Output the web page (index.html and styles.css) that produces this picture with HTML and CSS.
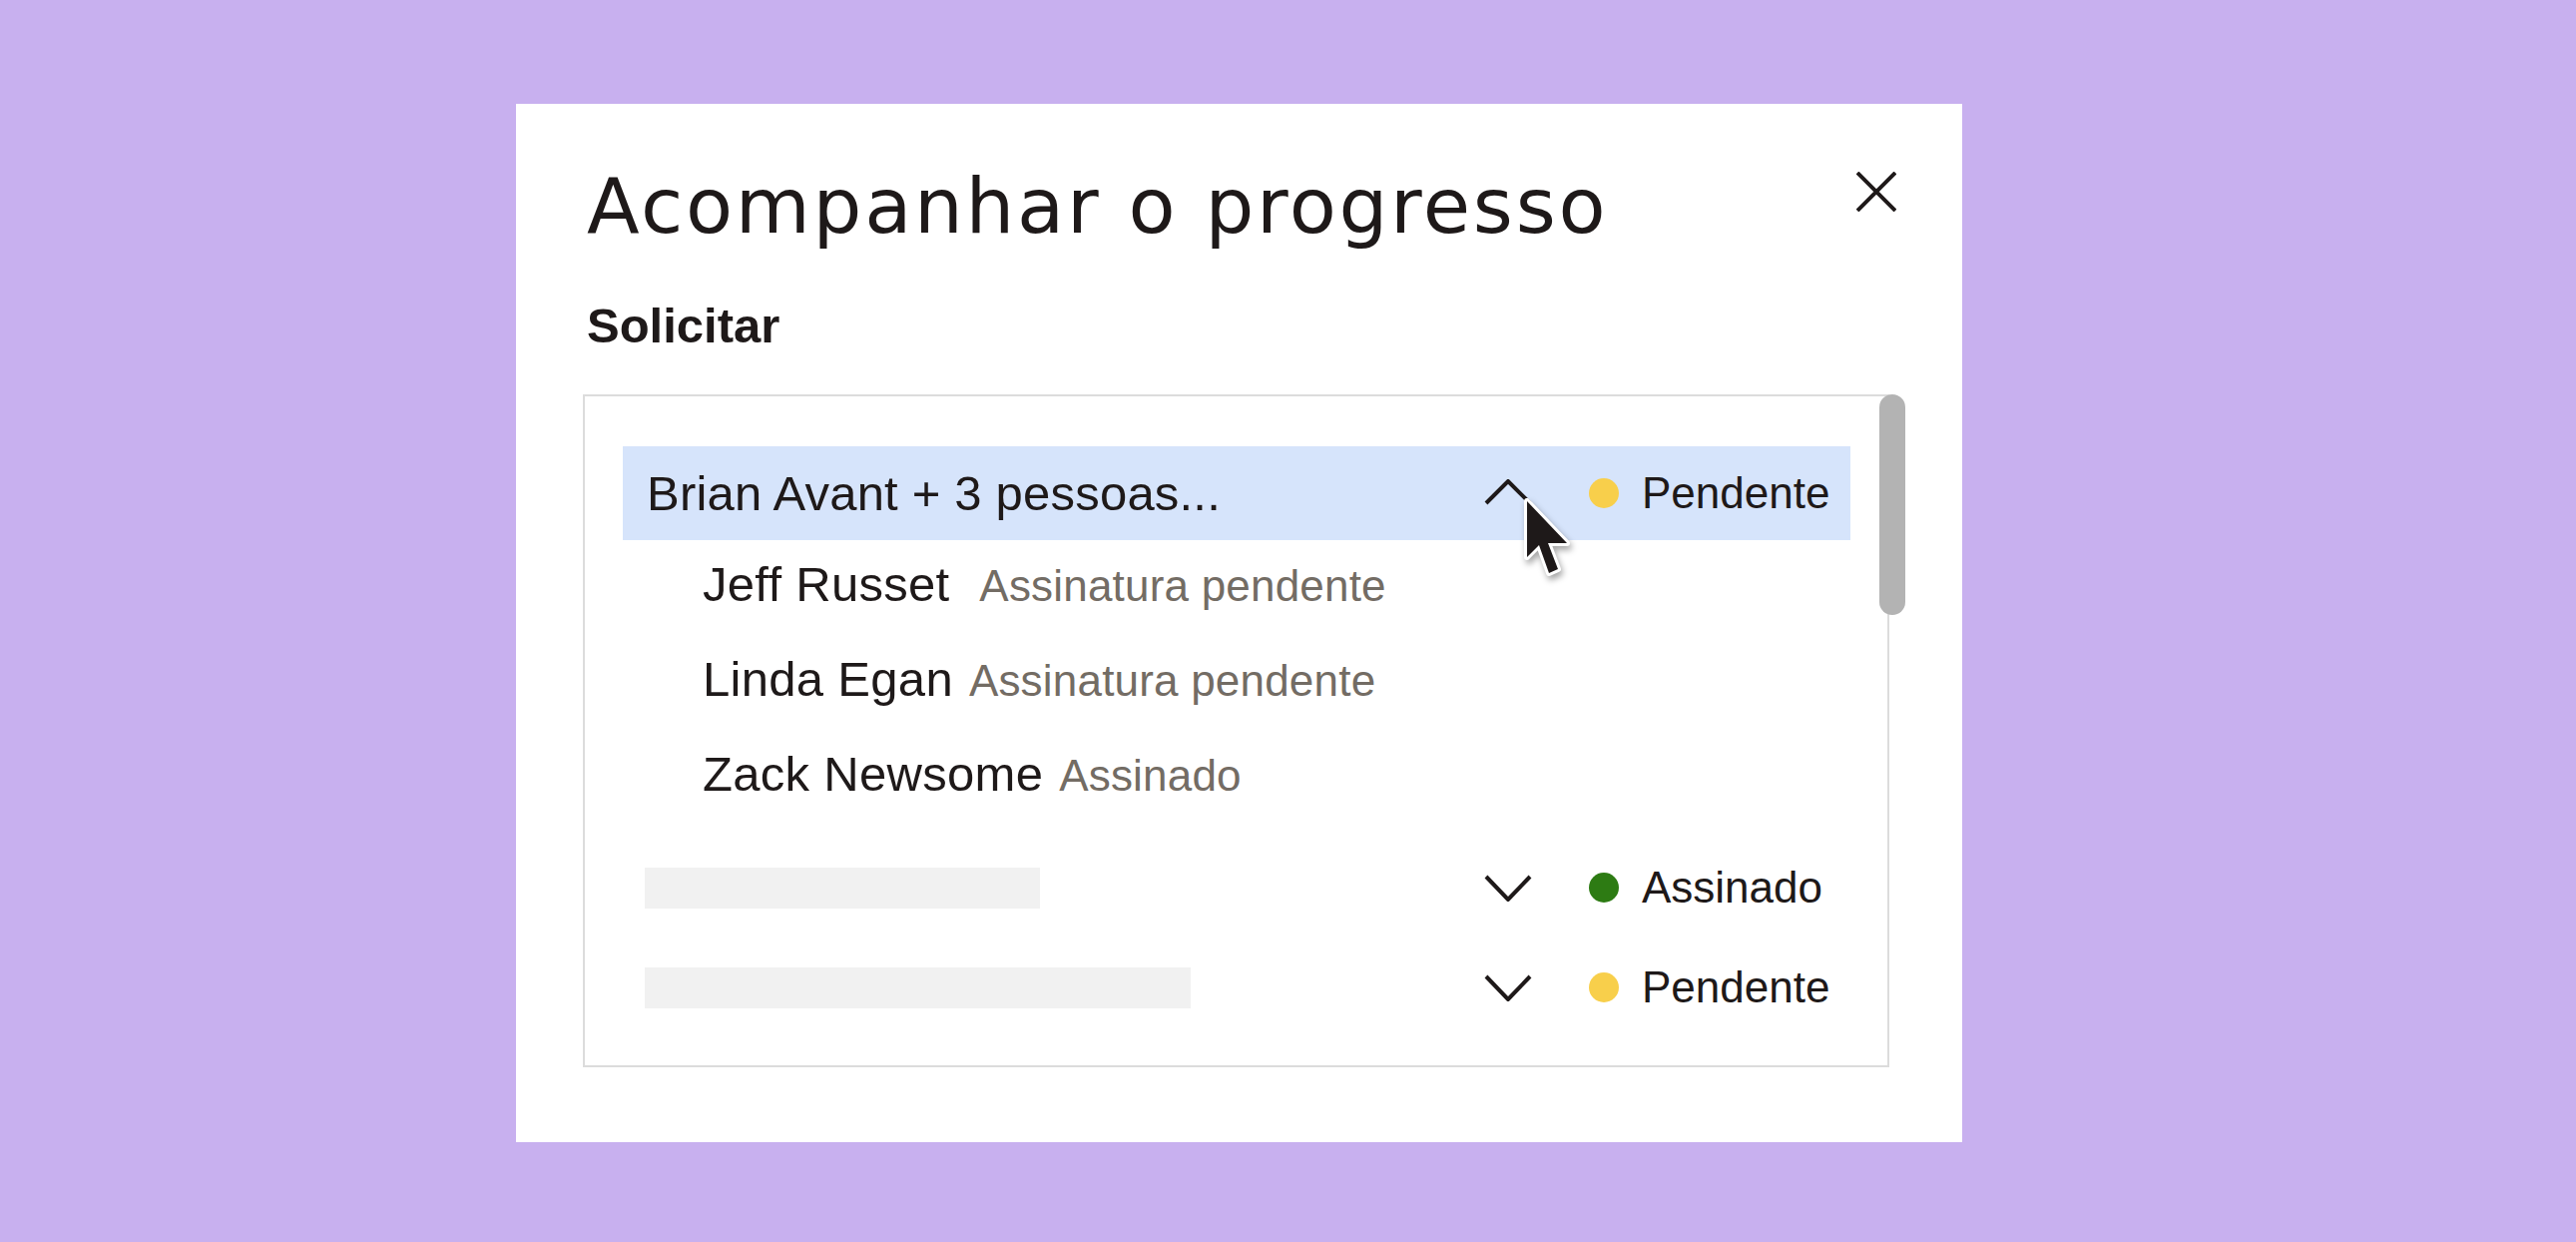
FILE: index.html
```html
<!DOCTYPE html>
<html lang="pt">
<head>
    <meta charset="UTF-8">
    <meta name="viewport" content="width=device-width, initial-scale=1.0">
    <title>Acompanhar o progresso</title>
    <link rel="stylesheet" href="styles.css">
</head>
<body>

    <div class="modal">
        <div class="modal-header">
            <h1 class="modal-title">Acompanhar o progresso</h1>
            <button class="close-btn" aria-label="Fechar">
                <svg width="40" height="40" viewBox="0 0 40 40">
                    <path d="M1 1 L39 39 M39 1 L1 39" stroke="#1e1919" stroke-width="4" fill="none"/>
                </svg>
            </button>
        </div>

        <h2 class="section-label">Solicitar</h2>

        <div class="request-list">
            <div class="scrollbar"></div>

            <div class="request-row active">
                <span class="request-name">Brian Avant + 3 pessoas...</span>
                <svg class="chevron" width="48" height="28" viewBox="0 0 48 28">
                    <polyline points="2,24 24,2 46,24" />
                </svg>
                <span class="status"><span class="dot pending"></span>Pendente</span>

                <svg class="cursor" width="70" height="100" viewBox="0 0 70 100">
                    <path d="M12 14 L12 70 L24 58 L34 86 L43 82 L33 56 L52 56 Z" />
                </svg>
            </div>

            <ul class="signers">
                <li><span class="signer-name">Jeff Russet</span>&nbsp; <span class="signer-status">Assinatura pendente</span></li>
                <li><span class="signer-name">Linda Egan</span> <span class="signer-status">Assinatura pendente</span></li>
                <li><span class="signer-name">Zack Newsome</span> <span class="signer-status">Assinado</span></li>
            </ul>

            <div class="request-row placeholder-row first">
                <span class="placeholder short"></span>
                <svg class="chevron" width="48" height="28" viewBox="0 0 48 28">
                    <polyline points="2,3 24,26 46,3" />
                </svg>
                <span class="status"><span class="dot signed"></span>Assinado</span>
            </div>

            <div class="request-row placeholder-row">
                <span class="placeholder long"></span>
                <svg class="chevron" width="48" height="28" viewBox="0 0 48 28">
                    <polyline points="2,3 24,26 46,3" />
                </svg>
                <span class="status"><span class="dot pending"></span>Pendente</span>
            </div>
        </div>
    </div>

</body>
</html>
```

FILE: styles.css
```css
html {
    background-color: #c8b0ef;
}
body {
    margin: 0;
    padding: 104px 0 0 517px;
    font-family: 'Liberation Sans', Arial, sans-serif;
    color: #1e1919;
}
.modal {
    width: 1449px;
    height: 1040px;
    box-sizing: border-box;
    padding: 64px 73px 0 67px;
    background-color: #ffffff;
}
.modal-header {
    display: flex;
    justify-content: space-between;
    align-items: flex-start;
}
.modal-title {
    margin: 0;
    padding-left: 4px;
    font-family: 'DejaVu Sans', sans-serif;
    font-weight: normal;
    font-size: 77px;
    line-height: 77px;
    letter-spacing: 2.7px;
}
.close-btn {
    margin: 4px -7px 0 0;
    padding: 0;
    border: none;
    background: none;
    width: 40px;
    height: 40px;
    cursor: pointer;
}
.close-btn svg {
    display: block;
}
.section-label {
    margin: 57px 0 45px 4px;
    font-size: 49px;
    line-height: 48px;
    font-weight: bold;
}
.request-list {
    position: relative;
    height: 674px;
    box-sizing: border-box;
    padding: 50px 37px 0 38px;
    border: 2px solid #dcdcdc;
}
.scrollbar {
    position: absolute;
    top: -2px;
    right: -18px;
    width: 26px;
    height: 221px;
    border-radius: 13px;
    background-color: #b3b3b3;
}
.request-row {
    position: relative;
    display: flex;
    align-items: center;
    height: 94px;
    padding-left: 24px;
}
.request-row.active {
    background-color: #d6e4fb;
}
.request-name {
    flex: 1;
    font-size: 49px;
    line-height: 48px;
    letter-spacing: 0.2px;
}
.chevron {
    display: block;
    margin-left: auto;
    margin-right: 57px;
    fill: none;
    stroke: #1e1919;
    stroke-width: 4;
}
.status {
    display: flex;
    align-items: center;
    gap: 23px;
    width: 262px;
    font-size: 44px;
    line-height: 46px;
}
.dot {
    width: 30px;
    height: 30px;
    border-radius: 50%;
}
.dot.pending {
    background-color: #f8cf4b;
}
.dot.signed {
    background-color: #2d7b13;
}
.cursor {
    position: absolute;
    left: 894px;
    top: 41px;
    fill: #1e1919;
    stroke: #ffffff;
    stroke-width: 6;
    stroke-linejoin: round;
    paint-order: stroke;
    filter: drop-shadow(2px 4px 3px rgba(0, 0, 0, 0.35));
}
.signers {
    list-style: none;
    margin: -3px 0 0 0;
    padding: 0;
}
.signers li {
    height: 95px;
    line-height: 95px;
    padding-left: 80px;
    font-size: 49px;
    letter-spacing: 0.3px;
    white-space: nowrap;
}
.signer-status {
    margin-left: 2px;
    font-size: 44px;
    letter-spacing: 0.2px;
    color: #736c64;
}
.placeholder-row {
    height: 100px;
    padding-left: 22px;
}
.placeholder-row.first {
    margin-top: 16px;
}
.placeholder {
    height: 41px;
    background-color: #f1f1f1;
}
.placeholder.short {
    width: 396px;
}
.placeholder.long {
    width: 547px;
}
```
